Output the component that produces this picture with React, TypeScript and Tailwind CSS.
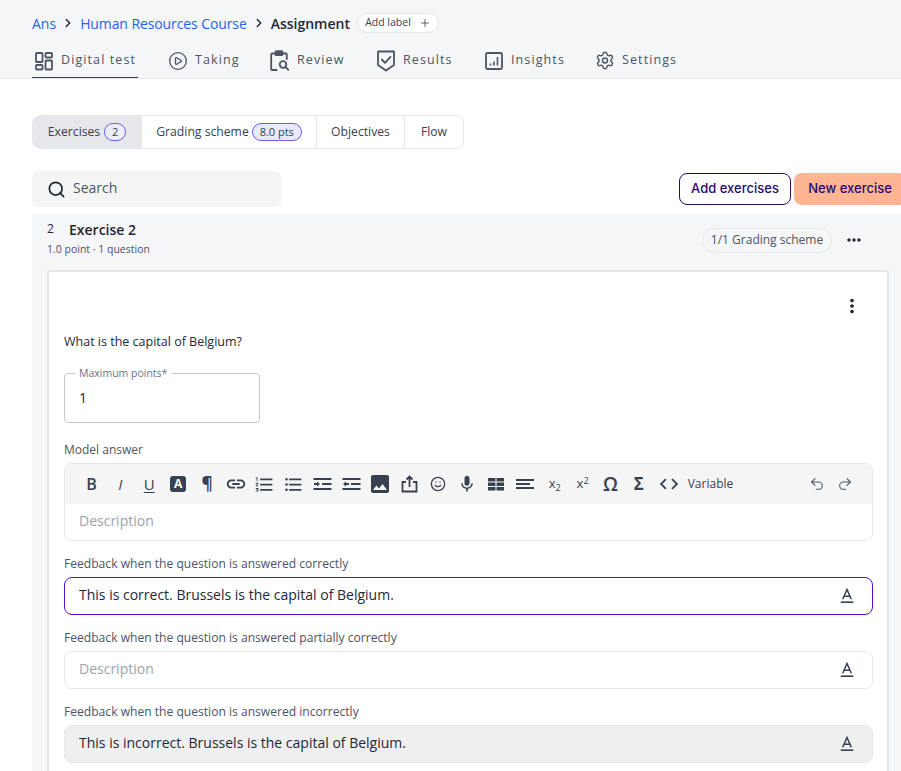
import React from 'react';
import { ChevronRight, CirclePlay, Plus, Search, Settings, Undo2, Redo2, Smile } from 'lucide-react';
import { MdFormatListNumbered, MdFormatListBulleted, MdImage, MdLink, MdMic, MdCode, MdMoreVert, MdMoreHoriz } from 'react-icons/md';

const DashIcon = () => (
  <svg width="20" height="20" viewBox="0 0 20 20" fill="none" stroke="#4b5563" strokeWidth="1.8">
    <rect x="2" y="2" width="6.5" height="9" rx="0.8" />
    <rect x="11.5" y="2" width="6.5" height="4.5" rx="0.8" />
    <rect x="2" y="14" width="6.5" height="4.5" rx="0.8" />
    <rect x="11.5" y="9.5" width="6.5" height="9" rx="0.8" />
  </svg>
);

const ReviewIcon = () => (
  <svg width="20" height="22" viewBox="0 0 20 22" fill="none" stroke="#4b5563" strokeWidth="1.8" strokeLinecap="round">
    <path d="M5 3.5H2.2a1 1 0 0 0-1 1V19a1 1 0 0 0 1 1h4.5" />
    <path d="M13 3.5h2.8a1 1 0 0 1 1 1V9" />
    <rect x="5.5" y="1.2" width="7" height="4" rx="0.8" fill="#4b5563" />
    <circle cx="13" cy="14.5" r="3.3" />
    <path d="M15.500 17l2.800 2.800" />
  </svg>
);

const ResultsIcon = () => (
  <svg width="20" height="22" viewBox="0 0 20 22" fill="none" stroke="#4b5563" strokeWidth="1.8" strokeLinejoin="round" strokeLinecap="round">
    <path d="M2 1.500h16v13.500l-8 5.500-8-5.500z" />
    <path d="M5.800 9.500l3.200 3.300 5.500-6" />
  </svg>
);

const InsightsIcon = () => (
  <svg width="18" height="18" viewBox="0 0 18 18" fill="none" stroke="#4b5563">
    <rect x="1" y="1" width="16" height="16" rx="1.500" strokeWidth="1.800" />
    <path d="M5.500 11.500v2M9 9.500v4M12.500 5v8.500" strokeWidth="1.600" />
  </svg>
);

const TextColorIcon = () => (
  <svg width="14" height="16" viewBox="0 0 14 16" fill="none" stroke="#374151" strokeWidth="1.500">
    <path d="M2.700 11.200L7 1.500l4.300 9.700M4 8.200h6" />
    <path d="M0.700 14.200h12.600" strokeWidth="1.600" />
  </svg>
);

const IndentIcon = ({ out }: { out?: boolean }) => (
  <svg width="19" height="14" viewBox="0 0 19 14" fill="#374151">
    <rect x="0.500" y="1" width="18" height="2" />
    <rect x="9" y="6" width="9.500" height="2" />
    <rect x="0.500" y="11" width="18" height="2" />
    {out ? <path d="M1 7l3-2.500V6h3v2H4v1.500z" /> : <path d="M7 7L4 4.500V6H1v2h3v1.500z" />}
  </svg>
);

const ShareIcon = () => (
  <svg width="17" height="18" viewBox="0 0 17 18" fill="none" stroke="#374151" strokeWidth="1.800">
    <path d="M5 7H1.500v9.500h14V7H12" />
    <path d="M8.500 12V2M5.500 4.500l3-3 3 3" />
  </svg>
);

const TableIcon = () => (
  <svg width="16" height="13" viewBox="0 0 16 13" fill="#374151">
    <rect x="0" y="0" width="7.500" height="3.500" />
    <rect x="8.500" y="0" width="7.500" height="3.500" />
    <rect x="0" y="4.500" width="7.500" height="3.500" />
    <rect x="8.500" y="4.500" width="7.500" height="3.500" />
    <rect x="0" y="9" width="7.500" height="3.500" />
    <rect x="8.500" y="9" width="7.500" height="3.500" />
  </svg>
);

const tabs = [
  { label: 'Digital test', icon: <DashIcon />, active: true, width: 'w-[106px]', margin: 'mr-[28px]' },
  { label: 'Taking', icon: <CirclePlay size={22} strokeWidth={1.6} color="#4b5563" />, width: 'w-[73px]', margin: 'mr-[29px]' },
  { label: 'Review', icon: <ReviewIcon />, width: 'w-[77px]', margin: 'mr-[29px]' },
  { label: 'Results', icon: <ResultsIcon />, width: 'w-[80px]', margin: 'mr-[28px]' },
  { label: 'Insights', icon: <InsightsIcon />, width: 'w-[82px]', margin: 'mr-[29px]' },
  { label: 'Settings', icon: <Settings size={21} strokeWidth={1.7} color="#4b5563" />, width: 'w-[84px]', margin: '' },
];

const Tool = ({ children, className = '' }: { children: React.ReactNode; className?: string }) => (
  <div className={`w-[28.9px] shrink-0 flex items-center justify-center text-[#374151] ${className}`}>{children}</div>
);

const Toolbar = () => (
  <div className="h-[40px] bg-[#f5f5f5] rounded-t-lg flex items-center pl-[12px] pr-[19px]">
    <Tool className="text-[16px] font-semibold">B</Tool>
    <Tool className="text-[15px] italic">I</Tool>
    <Tool className="text-[15px] underline underline-offset-2">U</Tool>
    <Tool>
      <div className="w-[16px] h-[16px] rounded-[3px] bg-[#374151] text-white text-[12px] font-bold leading-[16px] text-center">A</div>
    </Tool>
    <Tool className="text-[17px] font-bold">¶</Tool>
    <Tool><MdLink size={22} /></Tool>
    <Tool><MdFormatListNumbered size={21} /></Tool>
    <Tool><MdFormatListBulleted size={21} /></Tool>
    <Tool><IndentIcon /></Tool>
    <Tool><IndentIcon out /></Tool>
    <Tool><MdImage size={24} /></Tool>
    <Tool><ShareIcon /></Tool>
    <Tool><Smile size={16} strokeWidth={1.9} /></Tool>
    <Tool><MdMic size={20} /></Tool>
    <Tool><TableIcon /></Tool>
    <Tool>
      <div className="flex flex-col gap-[2px] w-[18px]">
        <div className="h-[2px] bg-[#374151]" />
        <div className="h-[2px] bg-[#374151] w-[14px]" />
        <div className="h-[2px] bg-[#374151]" />
      </div>
    </Tool>
    <Tool className="text-[13px] pl-[2px]"><span>x<sub className="text-[9px]">2</sub></span></Tool>
    <Tool className="text-[13px]"><span>x<sup className="text-[9px]">2</sup></span></Tool>
    <Tool className="text-[19px] font-semibold pr-[2px]"><span>Ω</span></Tool>
    <Tool className="text-[17px] font-bold pr-[3px]"><span>Σ</span></Tool>
    <Tool><MdCode size={22} /></Tool>
    <div className="text-[12px] text-[#374151] ml-[4px]">Variable</div>
    <div className="ml-auto flex items-center gap-[12px] text-[#4b5563]">
      <Undo2 size={16} strokeWidth={1.6} />
      <Redo2 size={16} strokeWidth={1.6} />
    </div>
  </div>
);

const FeedbackField = ({ label, text, variant }: { label: string; text: string; variant: 'focus' | 'empty' | 'filled' }) => {
  const box =
    variant === 'focus'
      ? 'border-[#5b0fd6] bg-white text-[#1f2937]'
      : variant === 'filled'
        ? 'border-[#e5e7eb] bg-[#efefef] text-[#1f2937]'
        : 'border-[#e5e7eb] bg-white text-[#9ca3af]';
  return (
    <div>
      <div className="text-[12.100px] leading-[16px] text-[#4b5563] mb-[5px]">{label}</div>
      <div className={`h-[38px] rounded-lg border flex items-center justify-between pl-[14px] pr-[18px] text-[14px] ${box}`}>
        <span className="pb-[4px]">{text}</span>
        <TextColorIcon />
      </div>
    </div>
  );
};

export default function App() {
  return (
    <div className="w-[901px] h-[771px] overflow-hidden bg-white font-['Open_Sans',sans-serif] text-[#1f2937]">
      <header className="h-[79px] bg-[#f5f6f8] border-b border-[#e5e7eb] pl-[32px] pt-[13px]">
        <div className="flex items-center h-[20px] text-[14px]">
          <span className="text-[#2563eb]">Ans</span>
          <ChevronRight size={14} strokeWidth={2.5} className="mx-[5px]" />
          <span className="text-[#2563eb] tracking-[-0.1px]">Human Resources Course</span>
          <ChevronRight size={14} strokeWidth={2.5} className="mx-[5px]" />
          <span className="font-[560] text-[#1f2937]">Assignment</span>
          <div className="ml-[7px] h-[20px] w-[82px] rounded-full border border-[#e5e7eb] bg-white flex items-center justify-center gap-[8px] text-[10.500px] text-[#374151]">
            Add label <Plus size={12} strokeWidth={1.6} />
          </div>
        </div>
        <nav className="flex mt-[13px]">
          {tabs.map(t => (
            <div key={t.label} className={`${t.width} ${t.margin} shrink-0 h-[32px] flex items-center gap-[7px] pl-[2px] pb-[2px] border-b ${t.active ? 'border-[#374151]' : 'border-transparent'}`}>
              <div className="w-[20px] shrink-0 flex items-center justify-center">{t.icon}</div>
              <span className="text-[12.500px] tracking-[1.100px] text-[#4b5563] whitespace-nowrap">{t.label}</span>
            </div>
          ))}
        </nav>
      </header>

      <main className="pl-[32px] pt-[36px]">
        <div className="inline-flex h-[34px] rounded-lg border border-[#e5e7eb] text-[12.200px] text-[#374151]">
          <div className="w-[109px] flex items-center justify-center gap-[4px] bg-[#e5e7eb] rounded-l-lg border-r border-[#e5e7eb]">
            Exercises
            <span className="w-[22px] h-[18px] rounded-full border border-[#6d5ef5] bg-[#eceefc] text-[11px] flex items-center justify-center">2</span>
          </div>
          <div className="w-[175px] flex items-center justify-center gap-[3px] border-r border-[#e5e7eb]">
            Grading scheme
            <span className="w-[50px] h-[18px] rounded-full border border-[#6d5ef5] bg-[#e8eafc] text-[11px] flex items-center justify-center">8.0 pts</span>
          </div>
          <div className="w-[88px] flex items-center justify-center border-r border-[#e5e7eb]">Objectives</div>
          <div className="w-[58px] flex items-center justify-center">Flow</div>
        </div>

        <div className="flex justify-between items-center mt-[22px] h-[36px] w-[874px]">
          <div className="w-[250px] h-[36px] rounded-lg bg-[#f5f5f5] flex items-center pl-[15px] gap-[7px] text-[14px] text-[#4b5563]">
            <Search size={19} strokeWidth={2.2} color="#1f2937" />
            <span className="pb-[4px]">Search</span>
          </div>
          <div className="flex gap-[3px] font-['Inter',sans-serif] text-[13px] font-medium text-[#2a0a6b]">
            <div className="w-[112px] h-[32px] rounded-lg border border-[#2a0a6b] flex items-center justify-center">Add exercises</div>
            <div className="w-[112px] h-[32px] rounded-lg bg-[#ffb594] flex items-center justify-center">New exercise</div>
          </div>
        </div>

        <section className="mt-[7px] bg-[#f5f6f8] pl-[15px] pr-[12px] pt-[5px] h-[560px]">
          <div className="flex justify-between h-[51px] pr-[25px]">
            <div>
              <div className="flex items-center h-[20px]">
                <span className="text-[12px] w-[22px]">2</span>
                <span className="text-[14px] font-[560]">Exercise 2</span>
              </div>
              <div className="text-[10.500px] text-[#4b5563] mt-[3px]">1.0 point · 1 question</div>
            </div>
            <div className="flex items-center gap-[12px] h-[26px] mt-[8px]">
              <div className="w-[130px] h-[25px] rounded-full border border-[#e5e7eb] flex items-center justify-center text-[12px] text-[#4b5563]">1/1 Grading scheme</div>
              <MdMoreHoriz size={20} color="#1f2937" />
            </div>
          </div>

          <div className="bg-white border-2 border-[#e2e4e9] rounded-[3px] pl-[15px] pr-[14px] h-[520px]">
            <div className="flex justify-end h-[54px] pt-[23px] pr-[10px]">
              <MdMoreVert size={22} color="#1f2937" />
            </div>
            <div className="text-[12.500px] leading-[18px] mt-[7px]">What is the capital of Belgium?</div>

            <div className="relative mt-[22px] w-[196px] h-[50px] rounded border border-[#c5c8ce] flex items-center pl-[14px] pb-[2px] text-[14px]">
              1
              <span className="absolute -top-[7px] left-[10px] bg-white px-[4px] text-[10.500px] leading-[13px] text-[#6b7280]">Maximum points*</span>
            </div>

            <div className="text-[12px] leading-[16px] text-[#4b5563] mt-[19px] mb-[5px]">Model answer</div>
            <div className="rounded-lg border border-[#e5e7eb]">
              <Toolbar />
              <div className="h-[36px] flex items-center pl-[14px] pb-[4px] text-[14px] text-[#9ca3af]">Description</div>
            </div>

            <div className="flex flex-col gap-[15px] mt-[15px]">
              <FeedbackField label="Feedback when the question is answered correctly" text="This is correct. Brussels is the capital of Belgium." variant="focus" />
              <FeedbackField label="Feedback when the question is answered partially correctly" text="Description" variant="empty" />
              <FeedbackField label="Feedback when the question is answered incorrectly" text="This is incorrect. Brussels is the capital of Belgium." variant="filled" />
            </div>
          </div>
        </section>
      </main>
    </div>
  );
}
